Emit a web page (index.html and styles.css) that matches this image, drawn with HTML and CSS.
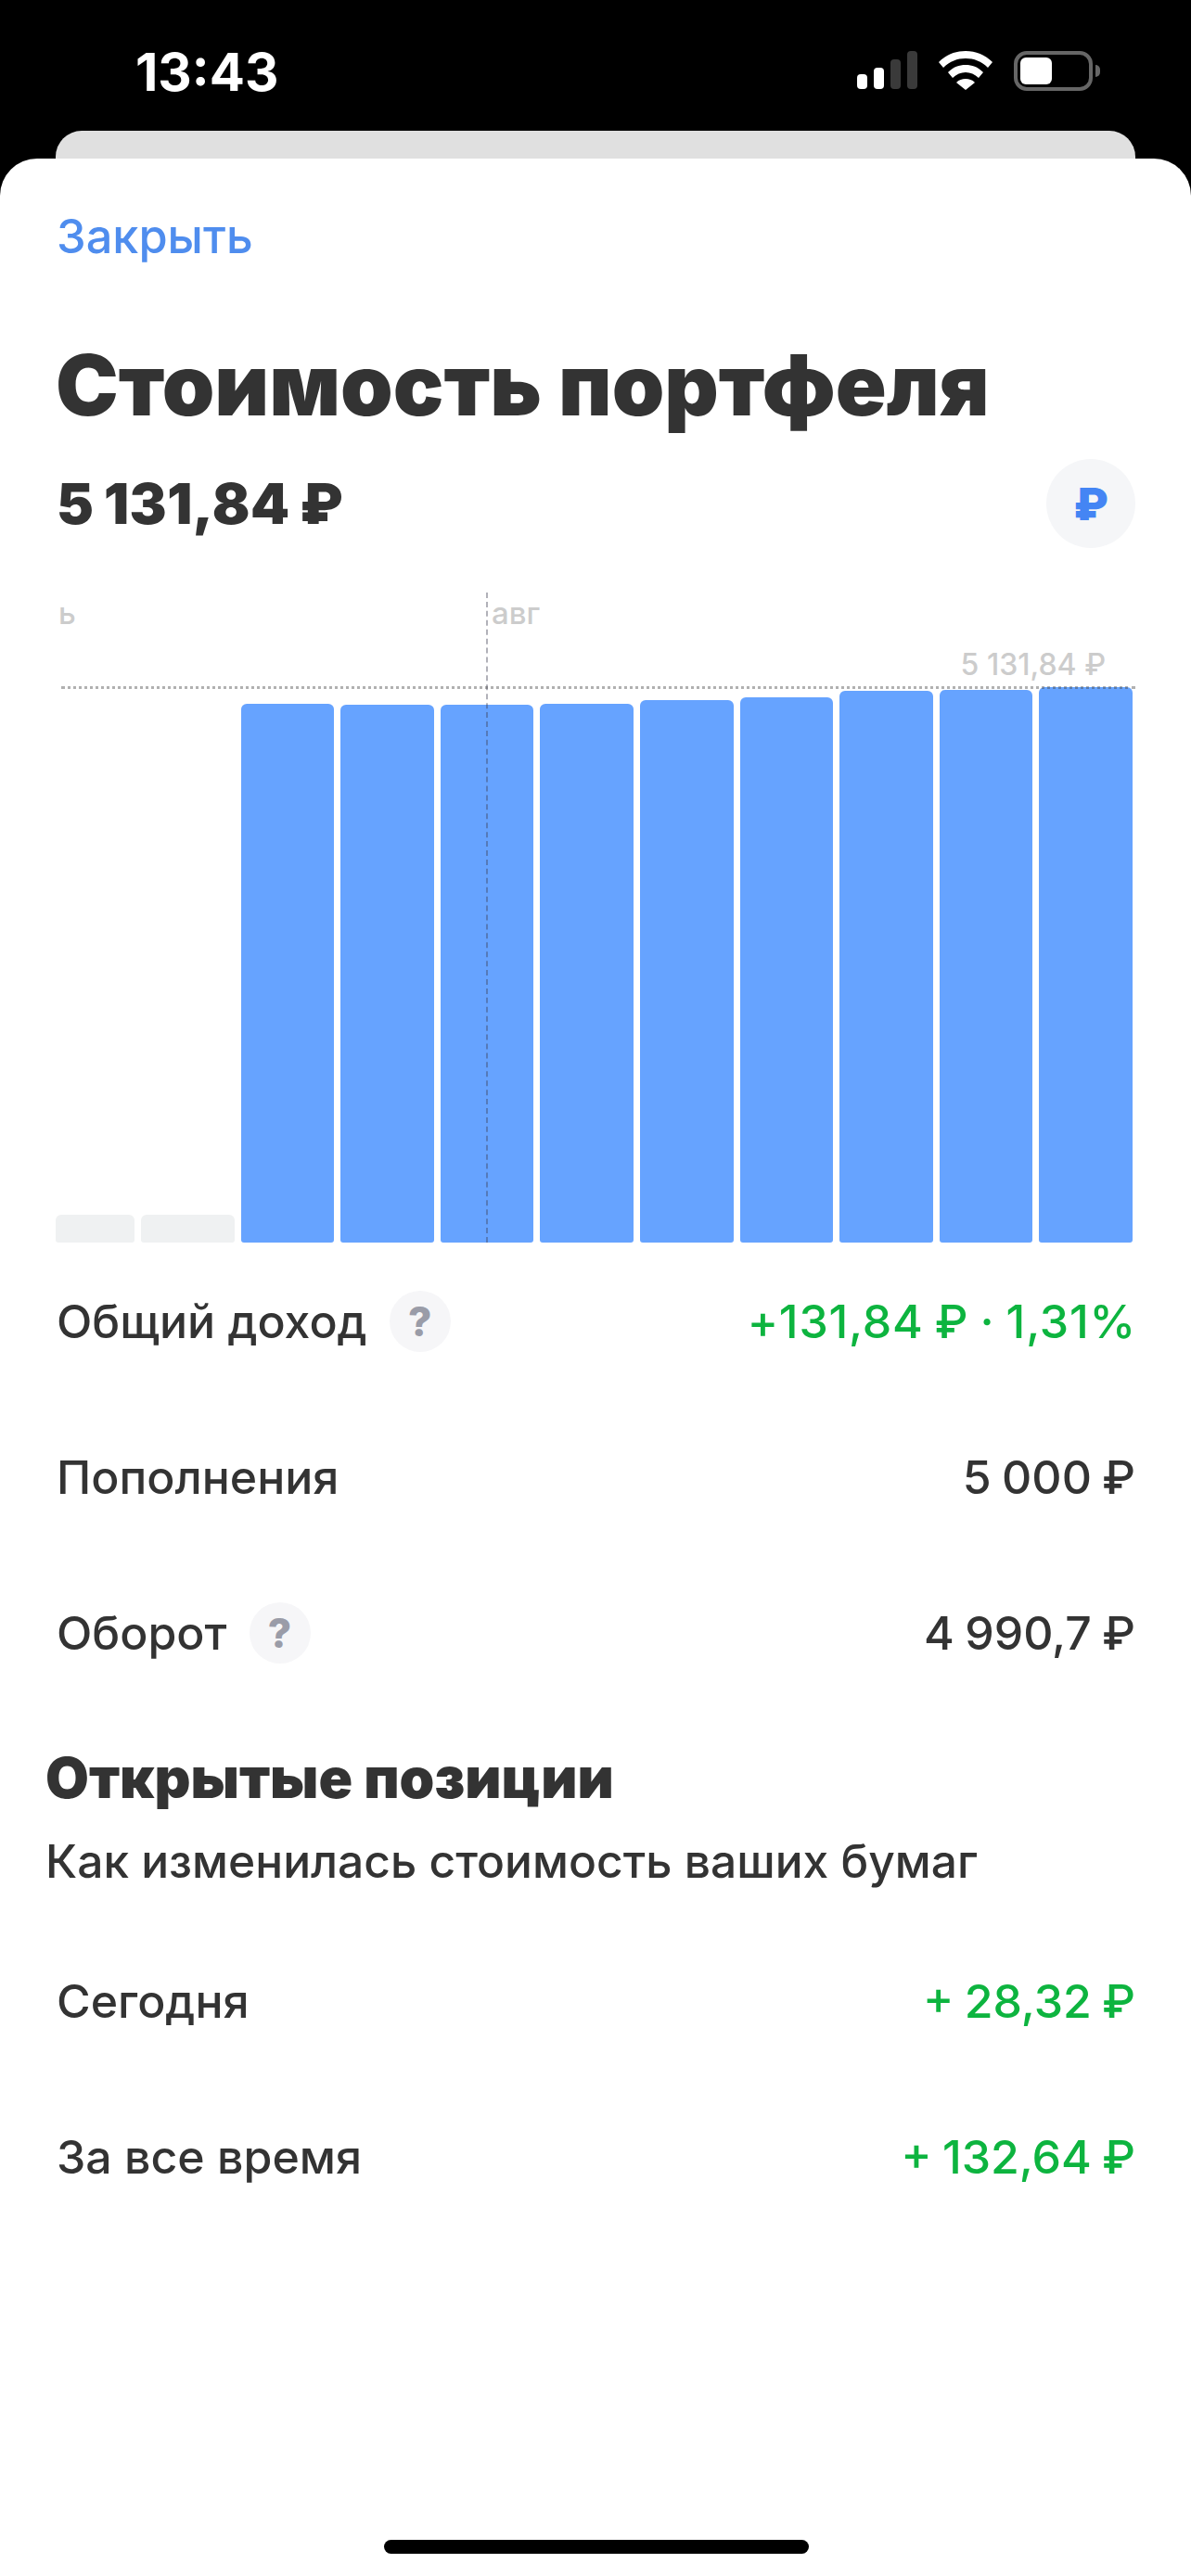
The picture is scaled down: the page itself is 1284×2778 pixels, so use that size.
FILE: index.html
```html
<!DOCTYPE html>
<html lang="ru">
<head>
<meta charset="utf-8">
<title>Стоимость портфеля</title>
<link rel="stylesheet" href="styles.css">
</head>
<body>
<div class="screen">
  <header class="status">
    <span class="time">13:43</span>
    <div class="status-icons">
      <svg class="signal" width="65" height="41" viewBox="0 0 65 41"><rect x="0" y="25" width="11" height="16" rx="4" fill="#fff"/><rect x="18" y="18" width="11" height="23" rx="4" fill="#fff"/><rect x="36" y="9" width="11" height="32" rx="4" fill="#3a3a3a"/><rect x="54" y="0" width="11" height="41" rx="4" fill="#3a3a3a"/></svg>
      <svg class="wifi" width="58" height="42" viewBox="0 0 58 42"><path d="M29 0C18 0 8 4 0 12l5 6C12 11 20 8 29 8s17 3 24 10l5-6C50 4 40 0 29 0z" fill="#fff"/><path d="M29 15c-7 0-13 2-19 8l5 6c4-4 9-6 14-6s10 2 14 6l5-6c-6-6-12-8-19-8z" fill="#fff"/><path d="M29 30c-4 0-7 1-10 4l10 8 10-8c-3-3-6-4-10-4z" fill="#fff"/></svg>
      <div class="battery"><div class="battery-body"><div class="battery-level"></div></div><div class="battery-nub"></div></div>
    </div>
  </header>
  <div class="back-card"></div>
  <main class="sheet">
    <a class="close">Закрыть</a>
    <h1 class="title">Стоимость портфеля</h1>
    <div class="amount-row">
      <span class="amount">5 131,84 ₽</span>
      <span class="currency">₽</span>
    </div>
    <section class="chart">
      <span class="month month-left">ь</span>
      <span class="month month-aug">авг</span>
      <span class="peak">5 131,84 ₽</span>
      <div class="line-v"></div>
      <div class="line-h"></div>
      <div class="bars">
        <div class="bar empty narrow" style="height:30px"></div>
        <div class="bar empty" style="height:30px"></div>
        <div class="bar" style="height:581px"></div>
        <div class="bar" style="height:580px"></div>
        <div class="bar" style="height:580px"></div>
        <div class="bar" style="height:581px"></div>
        <div class="bar" style="height:585px"></div>
        <div class="bar" style="height:588px"></div>
        <div class="bar" style="height:595px"></div>
        <div class="bar" style="height:596px"></div>
        <div class="bar" style="height:599px"></div>
      </div>
    </section>
    <section class="rows rows-summary">
      <div class="row"><span class="label">Общий доход<span class="help">?</span></span><span class="value value-wide green">+131,84 ₽ · 1,31%</span></div>
      <div class="row"><span class="label">Пополнения</span><span class="value">5 000 ₽</span></div>
      <div class="row"><span class="label">Оборот<span class="help">?</span></span><span class="value">4 990,7 ₽</span></div>
    </section>
    <section class="positions">
      <h2 class="subtitle">Открытые позиции</h2>
      <p class="desc">Как изменилась стоимость ваших бумаг</p>
    </section>
    <section class="rows rows-positions">
      <div class="row"><span class="label">Сегодня</span><span class="value green">+ 28,32 ₽</span></div>
      <div class="row"><span class="label">За все время</span><span class="value green">+ 132,64 ₽</span></div>
    </section>
    <div class="home-indicator"></div>
  </main>
</div>
</body>
</html>
```
FILE: styles.css
```css
* { box-sizing: border-box; }
html, body { margin: 0; padding: 0; background: #000; }
.screen {
  width: 1284px;
  height: 2778px;
  background: #000;
  font-family: Inter, "Liberation Sans", sans-serif;
  color: #333;
  display: flex;
  flex-direction: column;
  overflow: hidden;
}
.status {
  height: 141px;
  flex: none;
  padding: 57px 98px 0 146px;
  display: flex;
  justify-content: space-between;
  align-items: flex-start;
  color: #fff;
}
.time { font-size: 56.5px; font-weight: 700; line-height: 42px; }
.status-icons { display: flex; align-items: flex-start; gap: 23px; margin-top: -2px; }
.signal, .wifi { display: block; flex: none; }
.battery { display: flex; align-items: center; gap: 3px; }
.battery-body {
  width: 85px; height: 43px; border: 4px solid #666; border-radius: 14px; padding: 3px;
}
.battery-level { width: 34px; height: 29px; background: #fff; border-radius: 6px; }
.battery-nub { width: 5px; height: 13px; background: #666; border-radius: 0 7px 7px 0; }
.back-card {
  height: 30px;
  flex: none;
  margin: 0 60px;
  background: #e0e0e0;
  border-radius: 28px 28px 0 0;
}
.sheet {
  flex: 1;
  background: #fff;
  border-radius: 40px 40px 0 0;
  padding: 54px 60px 0;
  display: flex;
  flex-direction: column;
  position: relative;
}
.close { font-size: 50.5px; line-height: 60px; color: #4f8dee; font-weight: 500; display: block; margin-left: 1px; }
.title { margin: 77px 0 0; font-size: 90.7px; line-height: 106px; font-weight: 900; color: #333; }
.amount-row { display: flex; justify-content: space-between; align-items: center; margin-top: 27px; }
.amount { font-size: 60px; font-weight: 900; line-height: 96px; word-spacing: -2px; letter-spacing: .5px; margin-left: 1px; }
.currency {
  width: 96px; height: 96px; border-radius: 50%; background: #f5f6f8; color: #4485f4;
  font-size: 48px; font-weight: 900; display: flex; align-items: center; justify-content: center;
}
.chart { position: relative; height: 701px; margin-top: 48px; display: flex; align-items: flex-end; }
.bars { width: 100%; display: flex; align-items: flex-end; gap: 7px; height: 599px; padding-right: 3px; }
.bar { flex: 1 1 0; background: #66a3ff; border-radius: 6px 6px 3px 3px; }
.bar.narrow { flex: 0 0 85px; }
.bar.empty { background: #eff1f2; }
.month { position: absolute; top: 4px; font-size: 33px; line-height: 36px; color: #ccc; font-weight: 500; }
.month-left { left: 3px; }
.month-aug { left: 470px; }
.peak { position: absolute; top: 60px; right: 32px; font-size: 32px; line-height: 36px; color: #ccc; font-weight: 500; }
.line-v { position: absolute; left: 464px; top: 0; bottom: 0; width: 0; border-left: 2px dashed rgba(60,60,80,.4); }
.line-h { position: absolute; left: 6px; right: 0; top: 101px; height: 0; border-top: 3px dotted rgba(60,60,60,.4); }
.rows { display: flex; flex-direction: column; }
.rows-summary { margin-top: 1px; }
.row { display: flex; justify-content: space-between; align-items: center; height: 168px; font-size: 50px; font-weight: 550; line-height: 60px; }
.value { word-spacing: -2px; }
.value-wide { letter-spacing: .8px; margin-right: -1px; }
.label { display: flex; align-items: center; margin-left: 1px; }
.help {
  width: 66px; height: 66px; border-radius: 50%; background: #f6f6f8; color: #9a9ca8;
  font-size: 44px; font-weight: 800; display: flex; align-items: center; justify-content: center; margin-left: 24px;
}
.green { color: #0db43f; }
.positions { margin-left: -11px; margin-top: 37px; }
.subtitle { margin: 0; font-size: 60.5px; line-height: 70px; font-weight: 900; color: #333; }
.desc { margin: 25px 0 0; font-size: 49.7px; line-height: 60px; font-weight: 550; }
.rows-positions { margin-top: 37px; }
.home-indicator {
  position: absolute; left: 414px; bottom: 24px; width: 458px; height: 15px; background: #000; border-radius: 8px;
}
```
